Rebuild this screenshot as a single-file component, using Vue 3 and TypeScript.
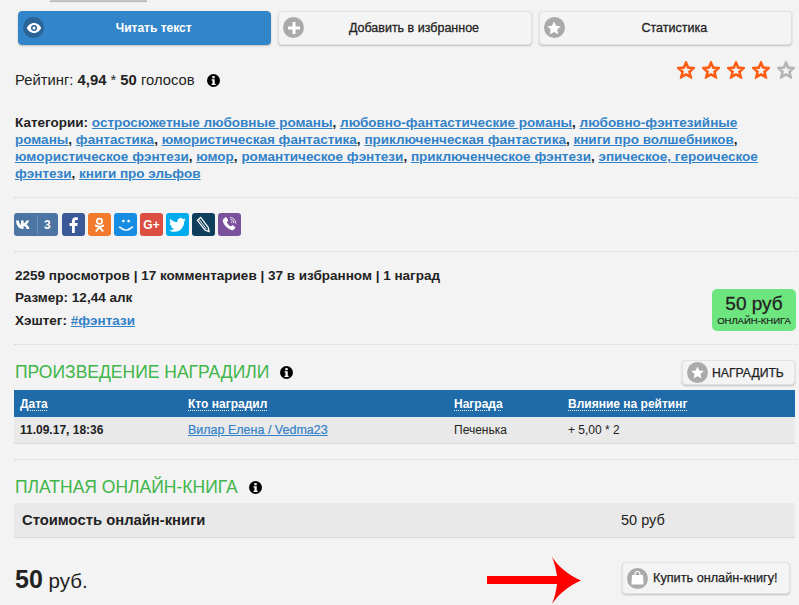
<script setup lang="ts">
const categories = [
  'остросюжетные любовные романы', 'любовно-фантастические романы', 'любовно-фэнтезийные романы', 'фантастика',
  'юмористическая фантастика', 'приключенческая фантастика', 'книги про волшебников', 'юмористическое фэнтези', 'юмор',
  'романтическое фэнтези', 'приключенческое фэнтези', 'эпическое, героическое фэнтези', 'книги про эльфов',
]
const starPath = 'M8 1.6l1.900 4.300 4.700.5-3.500 3.200 1 4.600L8 11.900l-4.100 2.300 1-4.600-3.500-3.200 4.700-.5z'
const stars = [true, true, true, true, false]
</script>

<template>
  <div class="page">
    <div class="tab-stub"></div>
    <div class="actions">
      <a class="action primary">
        <span class="disc dark">
          <svg width="16" height="16" viewBox="0 0 16 16"><path fill="#fff" d="M8 3C4.600 3 2 5.600.8 8c1.200 2.400 3.800 5 7.200 5s6-2.600 7.200-5C14 5.600 11.400 3 8 3z"/><circle cx="8" cy="8" r="3" fill="#2a6596"/><circle cx="8" cy="8" r="1.500" fill="#fff"/></svg>
        </span>
        <span class="action-label">Читать текст</span>
      </a>
      <a class="action">
        <span class="disc">
          <svg width="14" height="14" viewBox="0 0 14 14"><path fill="#fff" d="M5.500 1h3v4.500H13v3H8.500V13h-3V8.500H1v-3h4.500z"/></svg>
        </span>
        <span class="action-label">Добавить в избранное</span>
      </a>
      <a class="action">
        <span class="disc">
          <svg width="14" height="14" viewBox="0 0 16 16"><path fill="#fff" d="M8 .5l2.300 5 5.400.6-4 3.700 1.100 5.400L8 12.500l-4.800 2.700 1.100-5.400-4-3.700 5.400-.6z"/></svg>
        </span>
        <span class="action-label">Статистика</span>
      </a>
    </div>

    <div class="rating">
      <p class="rating-text">
        Рейтинг: <b>4,94</b> * <b>50</b> голосов
        <svg class="info" width="13" height="13" viewBox="0 0 14 14"><circle cx="7" cy="7" r="7" fill="#000"/><rect x="5.700" y="2.300" width="2.600" height="2.300" fill="#fff"/><path fill="#fff" d="M4.900 5.700h3.400v4.700h1v1.400H4.900v-1.400h1V7.100h-1z"/></svg>
      </p>
      <div class="stars">
        <svg v-for="(on, i) in stars" :key="i" width="18" height="18" viewBox="0 0 16 16">
          <path :d="starPath" fill="none" :stroke="on ? '#ff5a12' : '#b4b4b4'" stroke-width="2.300" />
        </svg>
      </div>
    </div>

    <p class="cats">
      <b>Категории: </b>
      <template v-for="(c, i) in categories" :key="c">
        <a class="link">{{ c }}</a><b v-if="i < categories.length - 1">, </b>
      </template>
    </p>

    <div class="sep cats-sep"></div>

    <div class="share">
      <span class="sb vk">
        <svg width="16" height="10" viewBox="0 0 16 10"><path fill="#fff" d="M0 .5h2.800c.3 2.500 1.400 4.100 2.200 4.400V.5h2.600v2.800C9 3 9.900 1.600 10.500.5h2.600c-.4 1.800-1.700 3.200-2.700 3.900 1 .6 2.500 1.900 3.100 4.600h-2.800c-.5-1.600-1.500-2.700-3.100-2.900V9H7C3 9 .4 6 0 .5z"/></svg>
        <i class="vk-div"></i><span class="vk-n">3</span>
      </span>
      <span class="sb fb"><svg width="11" height="16" viewBox="0 0 12 18"><path fill="#fff" d="M7.500 18V10h2.700l.5-3.200H7.500V5c0-.9.300-1.500 1.600-1.500h1.700V.6C10.500.5 9.500.4 8.400.4 6 .4 4.300 1.900 4.300 4.600v2.200H1.600V10h2.700v8z"/></svg></span>
      <span class="sb ok"><svg width="11" height="16" viewBox="0 0 13 18"><circle cx="6.500" cy="4.500" r="3.100" fill="none" stroke="#fff" stroke-width="2"/><path fill="none" stroke="#fff" stroke-width="2.200" stroke-linecap="round" d="M2 9.700c2.800 1.800 6.200 1.800 9 0M6.500 11.500L2.800 16M6.500 11.500l3.700 4.500"/></svg></span>
      <span class="sb mm"><svg width="16" height="14" viewBox="0 0 18 16"><circle cx="6" cy="3.500" r="1.500" fill="#fff"/><circle cx="12" cy="3.500" r="1.500" fill="#fff"/><path fill="none" stroke="#fff" stroke-width="1.800" stroke-linecap="round" d="M1.500 10.500c1.500 0 2 1 3 1.800 2.500 1.800 6.500 1.800 9 0 1-.8 1.500-1.800 3-1.800"/></svg></span>
      <span class="sb gp"><span class="gp-text">G+</span></span>
      <span class="sb tw"><svg width="17" height="14" viewBox="0 0 24 20"><path fill="#fff" d="M24 2.400c-.9.400-1.800.7-2.800.8 1-.6 1.800-1.600 2.200-2.700-1 .6-2 1-3.100 1.200C19.300.7 18 0 16.600 0c-2.700 0-4.900 2.200-4.900 4.900 0 .4 0 .8.100 1.100C7.700 5.800 4.100 3.900 1.700.9c-.4.700-.7 1.600-.7 2.500 0 1.700.9 3.200 2.200 4.100-.8 0-1.600-.2-2.200-.6v.1c0 2.400 1.700 4.400 3.900 4.800-.7.200-1.500.2-2.200.1.600 2 2.400 3.400 4.600 3.400-2.100 1.600-4.600 2.400-7.300 2.100C2.200 18.900 4.800 19.700 7.500 19.700c9.100 0 14-7.500 14-14v-.6c1-.7 1.800-1.600 2.500-2.700z"/></svg></span>
      <span class="sb lj"><svg width="15" height="17" viewBox="0 0 16 18"><path fill="none" stroke="#fff" stroke-width="1.300" d="M1.500 4.500L5 1.500l8 10.500 1 4.500-4.300-1.500z"/><path fill="none" stroke="#fff" stroke-width="1" d="M3.200 3.500l8 10.500"/></svg></span>
      <span class="sb vb"><svg width="17" height="17" viewBox="0 0 18 18"><path fill="#fff" d="M4.500 1.500c.8-.4 1.400 0 1.800.7l1 1.700c.4.700.2 1.300-.4 1.800l-.8.600c.6 1.800 2.200 3.700 4.200 4.700l.8-.8c.5-.5 1.100-.7 1.800-.2l1.500 1.100c.7.500 1 1.200.5 1.900-1 1.500-2.300 2.500-4 1.800C6.500 13 3 9.500 2 5.500c-.3-1.800 1-3.200 2.500-4z"/><path fill="none" stroke="#fff" stroke-width=".9" d="M9.500 1.500c3.500.2 6 2.700 6.200 6.500M10 3.800c2.200.2 3.500 1.600 3.600 3.800M10.500 6c.8.100 1.100.500 1.200 1.300"/></svg></span>
    </div>

    <div class="sep share-sep"></div>

    <div class="meta-block">
      <div class="meta">
        <p class="m1">2259 просмотров | 17 комментариев | 37 в избранном | 1 наград</p>
        <p class="m2">Размер: 12,44 алк</p>
        <p class="m3">Хэштег: <a class="link">#фэнтази</a></p>
      </div>
      <div class="badge">
        <span class="badge-price">50 руб</span>
        <span class="badge-sub">ОНЛАЙН-КНИГА</span>
      </div>
    </div>

    <div class="sep meta-sep"></div>

    <div class="section-head first">
      <h2>ПРОИЗВЕДЕНИЕ НАГРАДИЛИ</h2>
      <svg class="info h-info" width="13" height="13" viewBox="0 0 14 14"><circle cx="7" cy="7" r="7" fill="#000"/><rect x="5.700" y="2.300" width="2.600" height="2.300" fill="#fff"/><path fill="#fff" d="M4.900 5.700h3.400v4.700h1v1.400H4.900v-1.400h1V7.100h-1z"/></svg>
      <a class="award">
        <span class="disc small">
          <svg width="13" height="13" viewBox="0 0 16 16"><path fill="#fff" d="M8 .5l2.300 5 5.400.6-4 3.700 1.100 5.400L8 12.500l-4.800 2.700 1.100-5.400-4-3.700 5.400-.6z"/></svg>
        </span>
        НАГРАДИТЬ
      </a>
    </div>

    <div class="t-row t-head">
      <span class="c1"><u>Дата</u></span><span class="c2"><u>Кто наградил</u></span><span class="c3"><u>Награда</u></span><span class="c4"><u>Влияние на рейтинг</u></span>
    </div>
    <div class="t-row t-body">
      <span class="c1 strong">11.09.17, 18:36</span><span class="c2"><a class="link plain">Вилар Елена / Vedma23</a></span><span class="c3">Печенька</span><span class="c4">+ 5,00 * 2</span>
    </div>

    <div class="sep table-sep"></div>

    <div class="section-head second">
      <h2>ПЛАТНАЯ ОНЛАЙН-КНИГА</h2>
      <svg class="info h-info" width="13" height="13" viewBox="0 0 14 14"><circle cx="7" cy="7" r="7" fill="#000"/><rect x="5.700" y="2.300" width="2.600" height="2.300" fill="#fff"/><path fill="#fff" d="M4.900 5.700h3.400v4.700h1v1.400H4.900v-1.400h1V7.100h-1z"/></svg>
    </div>

    <div class="cost">
      <b>Стоимость онлайн-книги</b>
      <span>50 руб</span>
    </div>

    <div class="buy-row">
      <p class="total"><b>50</b> руб.</p>
      <a class="buy">
        <span class="disc small">
          <svg width="13" height="14" viewBox="0 0 13 14"><path fill="#fff" d="M1 4h11l.6 9.500H.4z"/><path fill="none" stroke="#fff" stroke-width="1.100" d="M4 5V3a2.500 2.500 0 0 1 5 0v2"/></svg>
        </span>
        Купить онлайн-книгу!
      </a>
      <svg class="arrow" width="95" height="47" viewBox="0 0 95 47"><path fill="#f00" d="M0 19h70C69 12 67.500 6 65 0c6 9 16 18 29 23.500C81 29 71 38 65 47c2.500-6 4-12 5-20H0z"/></svg>
    </div>
  </div>
</template>

<style>
html, body { margin: 0; background: #f3f3f3; overflow: hidden; }
</style>

<style scoped>
.page {
  box-sizing: border-box;
  width: 799px;
  height: 605px;
  padding: 0 4px 0 14px;
  background: #f3f3f3;
  color: #222;
  font-family: "Liberation Sans", Arial, sans-serif;
  font-size: 14px;
  overflow: hidden;
}
p { margin: 0; }
.tab-stub {
  width: 97px;
  height: 1px;
  margin-left: 36px;
  background: #c8c8c8;
  box-shadow: 0 1px 1px #aaa;
}
.actions {
  display: flex;
  gap: 7px;
  margin: 10px 3px 0 4px;
}
.action {
  position: relative;
  flex: 1;
  display: flex;
  align-items: center;
  justify-content: center;
  box-sizing: border-box;
  height: 34px;
  padding-left: 18px;
  background: #f4f4f4;
  border: 1px solid #e2e2e2;
  border-radius: 4px;
  box-shadow: 0 1px 2px rgba(0, 0, 0, .22);
  font-size: 12.5px;
  color: #222;
}
.action-label { -webkit-text-stroke: .3px currentColor; }
.action.primary { background: #3385ca; border-color: #3385ca; color: #fff; }
.action.primary .action-label { font-weight: 700; font-size: 12px; -webkit-text-stroke: 0; }
.action .disc { position: absolute; left: 4px; top: 5px; }
.disc {
  display: inline-flex;
  align-items: center;
  justify-content: center;
  width: 21px;
  height: 21px;
  border-radius: 50%;
  background: #aaa;
}
.disc.dark { background: #2a6596; }
.disc.small { flex: none; }
.rating {
  display: flex;
  justify-content: space-between;
  height: 58px;
}
.rating-text { margin: 27px 0 0 1px; line-height: 16px; font-size: 14.8px; }
.info { margin-left: 8px; vertical-align: -2px; }
.stars { display: flex; gap: 7px; margin: 16px 0 0 0; height: 18px; }
.stars svg { display: block; }
.cats {
  margin: 11px -2px 0 1px;
  font-size: 13.5px;
  line-height: 17px;
}
.cats b { font-weight: 700; }
.link {
  color: #3182c8;
  font-weight: 700;
  text-decoration: underline;
}
.link.plain { font-weight: 400; -webkit-text-stroke: .2px currentColor; font-size: 12.5px; }
.sep { border-top: 1px dotted #d6d6d6; margin-right: -3px; }
.cats-sep { margin-top: 15px; }
.share {
  display: flex;
  gap: 3px;
  margin-top: 15px;
  height: 23px;
}
.sb {
  display: flex;
  align-items: center;
  justify-content: center;
  width: 23px;
  height: 23px;
  border-radius: 3px;
}
.vk { width: 44px; margin-right: 1px; background: #4c75a3; gap: 0; }
.vk-div { width: 1px; height: 19px; background: #6d8fb5; margin: 0 6px 0 5px; }
.vk-n { color: #fff; font-size: 12px; font-weight: 700; width: 12px; }
.fb { background: #3b5998; }
.ok { background: #f27a2c; }
.mm { background: #168de2; }
.gp { background: #dc4e41; }
.gp-text { color: #fff; font-size: 12px; font-weight: 700; }
.tw { background: #00aced; }
.lj { background: #0d3f5c; }
.vb { background: #7b519d; }
.share-sep { margin-top: 15px; }
.meta-block {
  display: flex;
  justify-content: space-between;
  align-items: flex-end;
  height: 80px;
  margin-right: -1px;
  box-sizing: border-box;
}
.meta { font-size: 13.5px; font-weight: 700; align-self: flex-start; padding: 16px 0 0 1px; }
.m1, .m2 { line-height: 16px; }
.m2 { margin-top: 6px; }
.m3 { margin-top: 7px; line-height: 16px; }
.badge {
  display: flex;
  flex-direction: column;
  align-items: center;
  width: 84px;
  height: 42px;
  margin-bottom: 1px;
  border-radius: 5px;
  background: #6ee67f;
}
.badge-price { font-size: 19px; line-height: 22px; margin-top: 4px; -webkit-text-stroke: .3px currentColor; }
.badge-sub { font-size: 9.5px; line-height: 12px; -webkit-text-stroke: .2px currentColor; }
.meta-sep { margin-top: 12px; }
.section-head { position: relative; display: flex; align-items: center; }
.section-head h2 {
  margin: 0 0 0 1px;
  color: #3fb54a;
  font-size: 17.5px;
  font-weight: 400;
  line-height: 20px;
}
.h-info { margin-left: 11px; }
.section-head.first { height: 45px; }
.section-head.first h2, .section-head.first .h-info { margin-top: 9px; }
.award {
  display: flex;
  align-items: center;
  gap: 4px;
  box-sizing: border-box;
  height: 25px;
  width: 113px;
  margin: 10px 0 0 auto;
  padding-left: 4px;
  background: #f4f4f4;
  border: 1px solid #e2e2e2;
  border-radius: 4px;
  box-shadow: 0 1px 2px rgba(0, 0, 0, .22);
  font-size: 12.2px;
  -webkit-text-stroke: .25px currentColor;
}
.t-row { display: flex; align-items: center; box-sizing: border-box; font-size: 12px; }
.t-head {
  height: 27px;
  background: #1f6aa8;
  color: #fff;
  font-weight: 700;
}
.t-head u { text-decoration: underline dotted; text-underline-offset: 2px; }
.t-body {
  height: 27px;
  background: #e9e9e9;
  border-bottom: 1px solid #d8d8d8;
}
.c1 { width: 174px; padding-left: 6px; box-sizing: border-box; }
.c2 { width: 266px; }
.c3 { width: 114px; }
.strong { font-weight: 700; }
.table-sep { margin-top: 15px; }
.section-head.second { height: 43px; }
.section-head.second h2, .section-head.second .h-info { margin-top: 11px; }
.cost {
  display: flex;
  align-items: center;
  box-sizing: border-box;
  height: 35px;
  padding-left: 8px;
  background: #e9e9e9;
  border-bottom: 1px solid #d8d8d8;
  font-size: 14.8px;
}
.cost b { width: 599px; }
.cost span { font-size: 14.5px; }
.buy-row {
  position: relative;
  display: flex;
  align-items: flex-start;
  justify-content: space-between;
}
.total { margin: 26px 0 0 1px; font-size: 20.5px; line-height: 30px; }
.total b { font-size: 25px; }
.buy {
  display: flex;
  align-items: center;
  gap: 5px;
  box-sizing: border-box;
  height: 32px;
  width: 168px;
  margin: 24px 5px 0 0;
  padding-left: 4px;
  background: #f4f4f4;
  border: 1px solid #e2e2e2;
  border-radius: 4px;
  box-shadow: 0 1px 2px rgba(0, 0, 0, .22);
  font-size: 12.7px;
  -webkit-text-stroke: .25px currentColor;
}
.arrow { position: absolute; left: 473px; top: 19px; }
</style>
